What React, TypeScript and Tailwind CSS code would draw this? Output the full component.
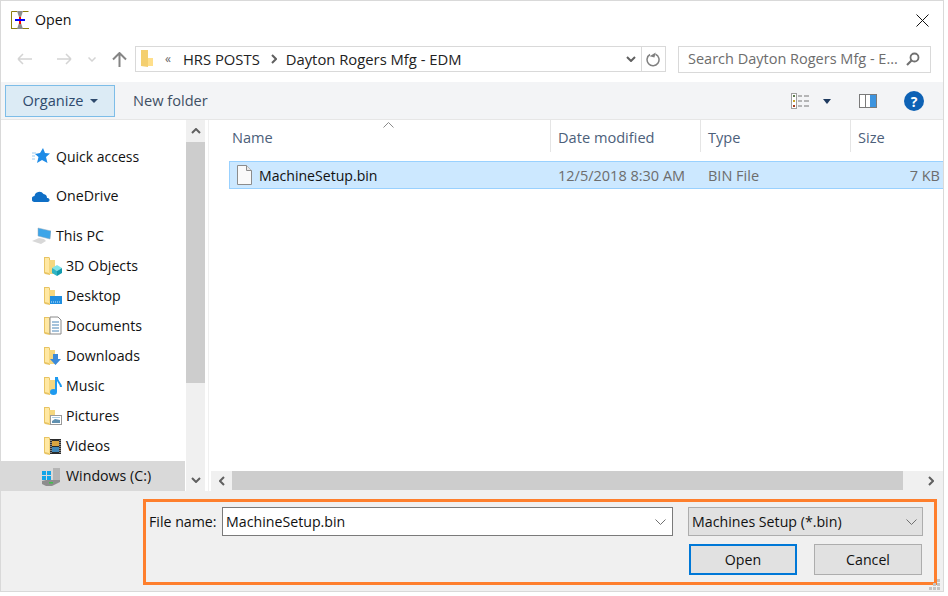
import React from 'react';

const Folder = ({ children }: { children?: React.ReactNode }) => (
  <svg width="18" height="20" viewBox="0 0 18 20" className="shrink-0">
    <path d="M0 1h5l1 1v17l-5-1-1-1z" fill="#e8c463" />
    <path d="M1 2h4v15l-4-1z" fill="#ffe8a3" />
    <path d="M5 4h6v14H5z" fill="#f5d77f" />
    {children}
  </svg>
);

const ChevronUp = () => (
  <svg width="10" height="6" viewBox="0 0 10 6"><path d="M1 5l4-4 4 4" fill="none" stroke="#606060" strokeWidth="2" /></svg>
);
const ChevronDown = () => (
  <svg width="10" height="6" viewBox="0 0 10 6"><path d="M1 1l4 4 4-4" fill="none" stroke="#606060" strokeWidth="2" /></svg>
);
const ChevronLeft = () => (
  <svg width="6" height="10" viewBox="0 0 6 10"><path d="M5 1L1 5l4 4" fill="none" stroke="#606060" strokeWidth="2" /></svg>
);
const ChevronRight = () => (
  <svg width="6" height="10" viewBox="0 0 6 10"><path d="M1 1l4 4-4 4" fill="none" stroke="#606060" strokeWidth="2" /></svg>
);
const ThinDown = () => (
  <svg width="11" height="6" viewBox="0 0 11 6"><path d="M.5.5l5 5 5-5" fill="none" stroke="#707070" /></svg>
);

const libraries: { label: string; icon: React.ReactNode }[] = [
  {
    label: '3D Objects',
    icon: <><path d="M8 12l5-3 5 3-5 3z" fill="#7fe3ea" /><path d="M8 12l5 3v5l-5-3z" fill="#2fb4c4" /><path d="M18 12l-5 3v5l5-3z" fill="#129aae" /></>,
  },
  {
    label: 'Desktop',
    icon: <><rect x="6" y="10" width="12" height="8" fill="#1f8ee0" /><path d="M7 16h10" stroke="#cfe8fb" strokeDasharray="1 1" /></>,
  },
  {
    label: 'Documents',
    icon: <><path d="M6 1h8l3 3v14H6z" fill="#fff" stroke="#8a8a8a" /><path d="M8 6h7M8 9h7M8 12h7M8 15h7" stroke="#4a86b8" /></>,
  },
  {
    label: 'Downloads',
    icon: <path d="M9 8h5v5h3l-5.500 6L6 13h3z" fill="#3b8ad9" />,
  },
  {
    label: 'Music',
    icon: <><path d="M11 2h2c0 4 4 5 4 9" fill="none" stroke="#1e9af0" strokeWidth="2" /><rect x="11" y="2" width="2" height="14" fill="#1e9af0" /><ellipse cx="9.500" cy="16" rx="3.500" ry="3" fill="#1e9af0" /></>,
  },
  {
    label: 'Pictures',
    icon: <><rect x="6.500" y="9.500" width="11" height="9" fill="#fff" stroke="#9a9a9a" /><path d="M8 15l3-2 5 1v3H8z" fill="#5f90b0" /><path d="M8 11.500h8" stroke="#a9cce3" /></>,
  },
  {
    label: 'Videos',
    icon: <><rect x="6" y="3" width="11" height="15" fill="#2b2b2b" /><rect x="8" y="5" width="7" height="5" fill="#d9a441" /><rect x="8" y="11" width="7" height="5" fill="#3f86b8" /><path d="M7 4v13M16 4v13" stroke="#ddd" strokeDasharray="1 1" /></>,
  },
];

const ColumnHeader = ({ label, width, divider = true }: { label: string; width: string; divider?: boolean }) => (
  <div className={`${width} h-[32px] pl-[7px] pt-[3px] flex items-center text-[14.6px] text-[#4c607a] ${divider ? 'border-r border-[#e5e5e5]' : ''}`}>
    {label}
  </div>
);

export default function App() {
  return (
    <div className="w-[944px] h-[592px] flex flex-col bg-white border border-[#d9d9d9] text-[14.2px] text-[#111] overflow-hidden font-['Open_Sans','Noto_Sans',sans-serif]">
      {/* title bar */}
      <div className="h-[39px] flex items-center pl-[10px] pr-[14px] pb-[1px] shrink-0">
        <svg width="18" height="18" viewBox="0 0 18 18">
          <path d="M.5 17.500V.5H6M12 .5h5.500M0 17.500h18" fill="none" stroke="#8a7f10" />
          <path d="M6 0h6L10 6v6l2 6H6l2-6V6z" fill="#8c8c8c" />
          <path d="M9 6v7" stroke="#f00" strokeWidth="2" />
          <path d="M4 9h10" stroke="#00f" strokeWidth="2" />
        </svg>
        <span className="ml-[6px]">Open</span>
        <svg width="13" height="13" viewBox="0 0 13 13" className="ml-auto">
          <path d="M.5.5l12 12M12.500.5l-12 12" stroke="#111" />
        </svg>
      </div>

      {/* address row */}
      <div className="h-[42px] flex items-center shrink-0 pb-[4px]">
        <div className="w-[134px] flex items-center pl-[16px] shrink-0">
          <svg width="16" height="12" viewBox="0 0 16 12" className="shrink-0">
            <path d="M1 6h14M1 6l5-5M1 6l5 5" fill="none" stroke="#d4d4d4" strokeWidth="1.500" />
          </svg>
          <svg width="16" height="12" viewBox="0 0 16 12" className="ml-[23px] shrink-0">
            <path d="M15 6H1M15 6l-5-5M15 6l-5 5" fill="none" stroke="#d4d4d4" strokeWidth="1.500" />
          </svg>
          <svg width="8" height="5" viewBox="0 0 8 5" className="ml-[16px] shrink-0">
            <path d="M.5.5L4 4 7.500.5" fill="none" stroke="#d4d4d4" strokeWidth="1.500" />
          </svg>
          <svg width="15" height="15" viewBox="0 0 15 15" className="ml-[16px] shrink-0">
            <path d="M7.500 15V1M1 7.500L7.500 1 14 7.500" fill="none" stroke="#858585" strokeWidth="2" />
          </svg>
        </div>
        <div className="w-[531px] h-[26px] flex items-center border border-[#d9d9d9] shrink-0">
          <svg width="12" height="18" viewBox="0 0 12 18" className="ml-[5px] shrink-0">
            <path d="M0 0h7v17l-7-1z" fill="#f4cf6f" />
            <path d="M7 8h5v8H7z" fill="#ffdf8b" />
          </svg>
          <span className="ml-[12px] text-[#666] text-[12px]">«</span>
          <span className="ml-[12px] text-[14.8px] text-[#222]">HRS POSTS</span>
          <span className="ml-[11px]"><ChevronRight /></span>
          <span className="ml-[9px] text-[14.8px] text-[#222]">Dayton Rogers Mfg - EDM</span>
          <span className="ml-auto mr-[5px]"><ChevronDown /></span>
          <div className="w-[24px] h-full border-l border-[#d9d9d9] flex items-center justify-center">
            <svg width="15" height="15" viewBox="0 0 15 15">
              <path d="M9.500 2.200A6 6 0 1 1 4 2.500" fill="none" stroke="#808080" strokeWidth="1.500" />
              <path d="M9 0v5H4z" fill="#808080" transform="rotate(15 7 3)" />
            </svg>
          </div>
        </div>
        <div className="ml-[12px] w-[253px] h-[27px] flex items-center border border-[#d9d9d9] pl-[9px] pr-[10px] text-[14.5px] text-[#6d6d6d] shrink-0">
          <span>Search Dayton Rogers Mfg - E...</span>
          <svg width="14" height="14" viewBox="0 0 14 14" className="ml-auto">
            <circle cx="8.500" cy="5.500" r="4" fill="none" stroke="#707070" strokeWidth="1.800" />
            <path d="M5.500 8.500L1 13" stroke="#707070" strokeWidth="2.200" />
          </svg>
        </div>
      </div>

      {/* toolbar */}
      <div className="h-[38px] flex items-center bg-[#f3f4f6] border-b border-[#e6e6e6] pl-[4px] pt-[1px] text-[14.6px] shrink-0">
        <div className="w-[110px] h-[32px] flex items-center justify-center gap-[6px] bg-[#dcebf5] border border-[#7dbde8] text-[#2f4a6d]">
          Organize
          <svg width="8" height="4" viewBox="0 0 8 4"><path d="M0 0h8L4 4z" fill="#2f4a6d" /></svg>
        </div>
        <span className="ml-[18px] text-[#3f4f64]">New folder</span>
        <svg width="18" height="16" viewBox="0 0 18 16" className="ml-auto">
          <rect x=".5" y=".5" width="5" height="15" fill="#fff" stroke="#a0a0a0" />
          <rect x="2" y="2" width="2" height="2" fill="#5d7d4e" />
          <rect x="2" y="7" width="2" height="2" fill="#c9a227" />
          <rect x="2" y="12" width="2" height="2" fill="#a63c1e" />
          <path d="M7 3h4M13 3h5M7 8h4M13 8h5M7 13h4M13 13h5" stroke="#777" />
        </svg>
        <svg width="8" height="5" viewBox="0 0 8 5" className="ml-[14px]"><path d="M0 0h8L4 5z" fill="#1f3a5f" /></svg>
        <svg width="18" height="14" viewBox="0 0 18 14" className="ml-[28px]">
          <rect x=".5" y=".5" width="17" height="13" fill="#fff" stroke="#7a7a7a" />
          <rect x="6" y="1" width="1" height="12" fill="#7a7a7a" />
          <rect x="11" y="1" width="6" height="12" fill="#3d94df" />
        </svg>
        <div className="ml-[27px] mr-[19px] w-[20px] h-[20px] rounded-full bg-[#0e62b5] text-white text-[14px] font-bold flex items-center justify-center">?</div>
      </div>

      {/* panes */}
      <div className="flex-1 min-h-0 flex">
        <div className="w-[184px] flex flex-col shrink-0">
          <div className="h-[21px] shrink-0" />
          <div className="h-[30px] flex items-center pl-[31px] gap-[6px] text-[14px] shrink-0">
            <svg width="18" height="16" viewBox="0 0 18 16" className="shrink-0">
              <path d="M11 0l2 5 5 .5-4 3.500 1.500 6L10 12l-5 3 1.500-6L3 6l5-1z" fill="#1e8be6" />
              <path d="M0 5h4M0 8h3M0 11h3" stroke="#9ccbf0" />
            </svg>
            Quick access
          </div>
          <div className="h-[10px] shrink-0" />
          <div className="h-[30px] flex items-center pl-[31px] gap-[6px] shrink-0">
            <svg width="18" height="12" viewBox="0 0 18 12" className="shrink-0">
              <path d="M3 12a3 3 0 0 1-.5-6A5 5 0 0 1 11.500 4 4 4 0 0 1 15 8a2 2 0 0 1 1 4z" fill="#0f6fc6" />
            </svg>
            OneDrive
          </div>
          <div className="h-[10px] shrink-0" />
          <div className="h-[30px] flex items-center pl-[31px] gap-[5px] shrink-0">
            <svg width="19" height="18" viewBox="0 0 19 18" className="shrink-0">
              <path d="M6 1l13 3-1 8-12-3z" fill="#3da5e8" stroke="#9ab" strokeWidth=".5" />
              <path d="M0 14l7-3 5 1 2 2-5 3z" fill="#d8d8d8" />
            </svg>
            This PC
          </div>
          {libraries.map(({ label, icon }) => (
            <div key={label} className="h-[30px] flex items-center pl-[43px] gap-[4px] shrink-0">
              <Folder>{icon}</Folder>
              {label}
            </div>
          ))}
          <div className="h-[30px] flex items-center pl-[40px] gap-[5px] bg-[#d9d9d9] shrink-0">
            <svg width="20" height="19" viewBox="0 0 20 19" className="shrink-0">
              <path d="M12 1h7v12h-7z" fill="#b5b5b5" />
              <path d="M1 4h4v4H1zM6 4h4v4H6zM1 9h4v4H1zM6 9h4v4H6z" fill="#12a5e8" />
              <path d="M1 14l4-1h14v2l-8 4H5l-4-2z" fill="#8d8d8d" />
              <rect x="8" y="15" width="4" height="1.500" fill="#3ec24b" />
            </svg>
            Windows (C:)
          </div>
        </div>

        <div className="w-[19px] ml-[1px] flex flex-col bg-[#f0f0f0] shrink-0">
          <div className="h-[22px] flex items-center justify-center shrink-0"><ChevronUp /></div>
          <div className="h-[241px] bg-[#cdcdcd] shrink-0" />
          <div className="flex-1" />
          <div className="h-[22px] flex items-center justify-center shrink-0"><ChevronDown /></div>
        </div>

        <div className="flex-1 min-w-0 ml-[3px] border-l border-[#f0f0f0] flex flex-col relative">
          <svg width="11" height="6" viewBox="0 0 11 6" className="absolute left-[174px] top-[2px]">
            <path d="M.5 5.500l5-5 5 5" fill="none" stroke="#8a8a8a" />
          </svg>
          <div className="flex shrink-0 ml-[16px]">
            <ColumnHeader label="Name" width="w-[326px]" />
            <ColumnHeader label="Date modified" width="w-[150px]" />
            <ColumnHeader label="Type" width="w-[150px]" />
            <ColumnHeader label="Size" width="flex-1" divider={false} />
          </div>
          <div className="mt-[9px] ml-[20px] h-[28px] flex items-center bg-[#cce8ff] border-y border-l border-[#99d1ff] pt-[1px] text-[14.5px] shrink-0">
            <svg width="15" height="20" viewBox="0 0 15 20" className="ml-[7px] -mt-[1px] shrink-0">
              <path d="M.5.5h9l5 5v14H.5z" fill="#fafafa" stroke="#8c8c8c" />
              <path d="M9.500.5v5h5" fill="#e8e8e8" stroke="#8c8c8c" />
            </svg>
            <span className="ml-[7px] w-[299px] text-[14.1px]">MachineSetup.bin</span>
            <span className="w-[150px] text-[#6d6d6d]">12/5/2018 8:30 AM</span>
            <span className="text-[#6d6d6d]">BIN File</span>
            <span className="ml-auto mr-[3px] text-[#6d6d6d]">7 KB</span>
          </div>
          <div className="flex-1" />
          <div className="h-[20px] ml-[2px] pb-[1px] flex bg-[#f0f0f0] shrink-0">
            <div className="w-[21px] flex items-center justify-center"><ChevronLeft /></div>
            <div className="w-[671px] bg-[#cdcdcd]" />
            <div className="flex-1 flex items-center justify-end pr-[9px]"><ChevronRight /></div>
          </div>
        </div>
      </div>

      {/* footer */}
      <div className="h-[100px] bg-[#f0f0f0] pt-[8px] pl-[142px] shrink-0">
        <div className="relative w-[794px] h-[86px] border-[3px] border-[#fe7f2d] pt-[5px] pl-[3px] pr-[11px]">
          <div className="flex items-center h-[29px]">
            <span className="w-[73px] shrink-0">File name:</span>
            <div className="w-[451px] h-[29px] flex items-center bg-white border border-[#7a7a7a] pl-[3px] pr-[6px] shrink-0">
              MachineSetup.bin
              <span className="ml-auto"><ThinDown /></span>
            </div>
            <div className="ml-[15px] flex-1 h-[29px] flex items-center bg-[#e1e1e1] border border-[#adadad] pl-[3px] pr-[5px]">
              Machines Setup (*.bin)
              <span className="ml-auto"><ThinDown /></span>
            </div>
          </div>
          <div className="flex justify-end mt-[8px] mr-[1px]">
            <div className="w-[108px] h-[31px] flex items-center justify-center bg-[#e1e1e1] border-2 border-[#0078d7]">Open</div>
            <div className="ml-[17px] w-[108px] h-[31px] flex items-center justify-center bg-[#e1e1e1] border border-[#adadad]">Cancel</div>
          </div>
          <svg width="11" height="11" viewBox="0 0 11 11" className="absolute -right-[6px] -bottom-[8px]">
            <path d="M8 0h3v3H8zM4 4h3v3H4zM8 4h3v3H8zM0 8h3v3H0zM4 8h3v3H4zM8 8h3v3H8z" fill="#c4c4c4" />
          </svg>
        </div>
      </div>
    </div>
  );
}
